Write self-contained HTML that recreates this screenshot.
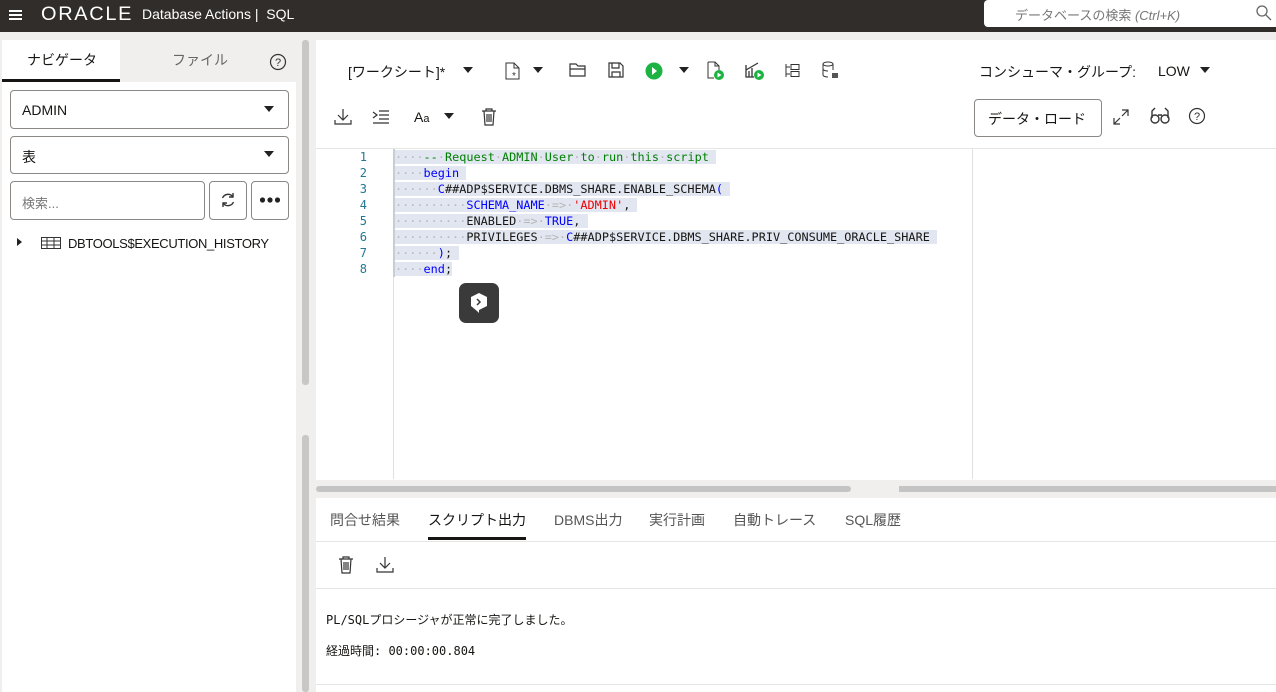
<!DOCTYPE html>
<html><head><meta charset="utf-8"><style>
*{box-sizing:border-box;margin:0;padding:0}
body{width:1276px;height:692px;overflow:hidden;background:#f1efed;font-family:"Liberation Sans","Noto Sans CJK JP",sans-serif;color:#161513;position:relative}
.a{position:absolute}
.hdr{left:0;top:0;width:1276px;height:32px;background:#312d2a;color:#fff}
.box{border:1px solid #8a8785;border-radius:4px;background:#fff}
.code{font-family:"DejaVu Sans Mono","Liberation Mono",monospace;font-size:11.85px;line-height:16px;white-space:pre}
.ln{width:367px;text-align:right;color:#237893;font-family:"DejaVu Sans Mono",monospace;font-size:12px;line-height:16px}
.sel{background:#e1e6f0}
.k{color:#0000ff}.c{color:#008000}.s{color:#e00}.d{color:#b7b7b7}
.tab{font-size:14px;color:#555}
svg{position:absolute}
</style></head><body>
<div class="a hdr">
  <div class="a" style="left:9px;top:10px;width:13px;height:2px;background:#fff;box-shadow:0 4px #fff,0 8px #fff"></div>
  <div class="a" style="left:41px;top:4px;font-size:19px;letter-spacing:1.6px;transform:scaleX(1.05);transform-origin:left">ORACLE</div>
  <div class="a" style="left:142px;top:6px;font-size:14px">Database Actions |&nbsp; SQL</div>
  <div class="a" style="left:984px;top:0;width:292px;height:27px;background:#fff;border-radius:4px 0 0 4px"></div>
  <div class="a" style="left:1015px;top:5px;font-size:13px;color:#777">データベースの検索 <i>(Ctrl+K)</i></div>
  <svg style="left:1256px;top:5px" width="16" height="16"><circle cx="6" cy="6" r="5" fill="none" stroke="#666" stroke-width="1.3"/><path d="M10 10l5 5" stroke="#666" stroke-width="1.3"/></svg>
</div>
<div class="a" style="left:2px;top:82px;width:294px;height:610px;background:#fff"></div>
<div class="a" style="left:2px;top:40px;width:118px;height:42px;background:#fff"></div>
<div class="a" style="left:2px;top:79px;width:118px;height:3px;background:#161513"></div>
<div class="a" style="left:27px;top:50px;font-size:14px">ナビゲータ</div>
<div class="a" style="left:172px;top:50px;font-size:14px;color:#666">ファイル</div>
<svg style="left:269px;top:53px" width="18" height="18"><circle cx="9" cy="9" r="7.5" fill="none" stroke="#333" stroke-width="1.2"/><text x="9" y="13" font-size="11" text-anchor="middle" fill="#333" font-family="Liberation Sans">?</text></svg>
<div class="a box" style="left:10px;top:90px;width:279px;height:39px"></div>
<div class="a" style="left:22px;top:102px;font-size:14px">ADMIN</div>
<div class="a" style="left:264px;top:106px;border:5px solid transparent;border-top:6px solid #222"></div>
<div class="a box" style="left:10px;top:136px;width:279px;height:38px"></div>
<div class="a" style="left:22px;top:147px;font-size:14px">表</div>
<div class="a" style="left:264px;top:151px;border:5px solid transparent;border-top:6px solid #222"></div>
<div class="a box" style="left:10px;top:181px;width:195px;height:39px"></div>
<div class="a" style="left:22px;top:193px;font-size:13px;color:#777">検索...</div>
<div class="a box" style="left:209px;top:181px;width:38px;height:39px"></div>
<svg style="left:219px;top:191px" width="18" height="18"><path d="M14 6A6 6 0 0 0 3.5 7M4 12a6 6 0 0 0 10.5-1" fill="none" stroke="#333" stroke-width="1.4"/><path d="M14 2v4h-4M4 16v-4h4" fill="none" stroke="#333" stroke-width="1.4"/></svg>
<div class="a box" style="left:251px;top:181px;width:38px;height:39px"></div>
<svg style="left:259px;top:196px" width="22" height="8"><circle cx="3.5" cy="4" r="2.6" fill="#222"/><circle cx="11" cy="4" r="2.6" fill="#222"/><circle cx="18.5" cy="4" r="2.6" fill="#222"/></svg>
<div class="a" style="left:17px;top:238px;border:4px solid transparent;border-left:5px solid #222"></div>
<svg style="left:41px;top:237px" width="20" height="12"><rect x="0.5" y="0.5" width="19" height="11" fill="none" stroke="#333"/><path d="M0 4h20M0 8h20M6 0v12M13 0v12" stroke="#333"/></svg>
<div class="a" style="left:68px;top:236px;font-size:13px;letter-spacing:-0.35px">DBTOOLS$EXECUTION_HISTORY</div>
<div class="a" style="left:302px;top:40px;width:7px;height:345px;background:#c9c7c5;border-radius:3px"></div>
<div class="a" style="left:302px;top:435px;width:7px;height:257px;background:#c9c7c5;border-radius:3px"></div>
<div class="a" style="left:316px;top:40px;width:960px;height:652px;background:#fff"></div>
<div class="a" style="left:348px;top:62px;font-size:14px">[ワークシート]*</div>
<div class="a" style="left:463px;top:67px;border:5px solid transparent;border-top:6px solid #222"></div>
<svg style="left:505px;top:62px" width="16" height="18"><path d="M1 1h8l5 5v11H1z M9 1v5h5" fill="none" stroke="#333"/><text x="7" y="17" font-size="10" fill="#333">*</text></svg>
<div class="a" style="left:533px;top:67px;border:5px solid transparent;border-top:6px solid #222"></div>
<svg style="left:569px;top:63px" width="18" height="14"><path d="M1 1h6l2 2h7v10H1zM1 6h15" fill="none" stroke="#333" stroke-width="1.2"/></svg>
<svg style="left:608px;top:62px" width="16" height="16"><path d="M1 1h11l3 3v11H1z M4 1v5h7V1 M4 15v-5h8v5" fill="none" stroke="#333" stroke-width="1.2"/></svg>
<svg style="left:645px;top:62px" width="18" height="18"><circle cx="9" cy="9" r="8.5" fill="#1cb342"/><path d="M7 5l5 4-5 4z" fill="#fff"/></svg>
<div class="a" style="left:679px;top:67px;border:5px solid transparent;border-top:6px solid #222"></div>
<svg style="left:707px;top:61px" width="18" height="20"><path d="M1 1h7l4 4v6 M8 1v4h4 M1 1v16h6" fill="none" stroke="#333"/><circle cx="12" cy="14" r="5" fill="#1cb342"/><path d="M10.5 11.5l4 2.5-4 2.5z" fill="#fff"/></svg>
<svg style="left:745px;top:61px" width="20" height="20"><path d="M1 4v12h8M4 10v6M7 7v9M1 9l12-7" fill="none" stroke="#333" stroke-width="1.3"/><circle cx="14" cy="14" r="5" fill="#1cb342"/><path d="M12.5 11.5l4 2.5-4 2.5z" fill="#fff"/></svg>
<svg style="left:784px;top:63px" width="16" height="16"><path d="M2 1v13M2 4h4M2 11h4" stroke="#333" fill="none"/><rect x="7" y="1.5" width="8" height="5" fill="none" stroke="#333"/><rect x="7" y="8.5" width="8" height="5" fill="none" stroke="#333"/></svg>
<svg style="left:822px;top:61px" width="18" height="18"><ellipse cx="6" cy="3" rx="5" ry="2" fill="none" stroke="#333"/><path d="M1 3v11c0 1 2 2 5 2M11 3v6M1 8c0 1 2 2 5 2" fill="none" stroke="#333"/><rect x="10" y="12" width="6" height="5" fill="#555"/></svg>
<div class="a" style="left:979px;top:62px;font-size:14px">コンシューマ・グループ:</div>
<div class="a" style="left:1158px;top:63px;font-size:14px">LOW</div>
<div class="a" style="left:1200px;top:67px;border:5px solid transparent;border-top:6px solid #222"></div>
<svg style="left:334px;top:108px" width="18" height="18"><path d="M9 1v11M4 7l5 5 5-5M1 12v4h16v-4" fill="none" stroke="#333" stroke-width="1.2"/></svg>
<svg style="left:372px;top:110px" width="18" height="16"><path d="M1 2l4 3-4 3M7 1h10M7 5h10M7 9h10M1 13h16" fill="none" stroke="#333" stroke-width="1.2"/></svg>
<div class="a" style="left:414px;top:109px;font-size:14px">A<span style="font-size:11px">a</span></div>
<div class="a" style="left:444px;top:113px;border:5px solid transparent;border-top:6px solid #222"></div>
<svg style="left:481px;top:108px" width="16" height="18"><path d="M1 3h14M5 3V1h6v2M3 3l1 14h8l1-14M6 6v8M8 6v8M10 6v8" fill="none" stroke="#333" stroke-width="1.2"/></svg>
<div class="a box" style="left:974px;top:99px;width:128px;height:38px"></div>
<div class="a" style="left:988px;top:109px;font-size:14px">データ・ロード</div>
<svg style="left:1113px;top:109px" width="16" height="16"><path d="M9 1h6v6M15 1L9 7M7 15H1V9M1 15l6-6" fill="none" stroke="#333" stroke-width="1.2"/></svg>
<svg style="left:1150px;top:107px" width="20" height="18"><circle cx="5" cy="12" r="4" fill="none" stroke="#333" stroke-width="1.4"/><circle cx="15" cy="12" r="4" fill="none" stroke="#333" stroke-width="1.4"/><path d="M2 11V4l3-3M18 11V4l-3-3M8 8h4" fill="none" stroke="#333" stroke-width="1.4"/></svg>
<svg style="left:1188px;top:107px" width="18" height="18"><circle cx="9" cy="9" r="7.5" fill="none" stroke="#333" stroke-width="1.2"/><text x="9" y="13" font-size="11" text-anchor="middle" fill="#333" font-family="Liberation Sans">?</text></svg>
<div class="a" style="left:316px;top:148px;width:960px;height:1px;background:#e5e5e5"></div>
<div class="a" style="left:393px;top:149px;width:1px;height:330px;background:#e0e0e0"></div>
<div class="a" style="left:972px;top:149px;width:1px;height:330px;background:#e0e0e0"></div>
<div class="a" style="left:0;top:149px">
<div class="ln">1<br>2<br>3<br>4<br>5<br>6<br>7<br>8</div>
</div>
<div class="a code" style="left:395px;top:149px"><span class="sel"><span class="d">····</span><span class="c">--<span class="d">·</span>Request<span class="d">·</span>ADMIN<span class="d">·</span>User<span class="d">·</span>to<span class="d">·</span>run<span class="d">·</span>this<span class="d">·</span>script</span> </span>
<span class="sel"><span class="d">····</span><span class="k">begin</span> </span>
<span class="sel"><span class="d">······</span><span class="k">C</span>##ADP$SERVICE.DBMS_SHARE.ENABLE_SCHEMA<span class="k">(</span> </span>
<span class="sel"><span class="d">··········</span><span class="k">SCHEMA_NAME</span><span class="d">·=>·</span><span class="s">'ADMIN'</span>, </span>
<span class="sel"><span class="d">··········</span>ENABLED<span class="d">·=>·</span><span class="k">TRUE</span>, </span>
<span class="sel"><span class="d">··········</span>PRIVILEGES<span class="d">·=>·</span><span class="k">C</span>##ADP$SERVICE.DBMS_SHARE.PRIV_CONSUME_ORACLE_SHARE </span>
<span class="sel"><span class="d">······</span><span class="k">)</span>; </span>
<span class="sel"><span class="d">····</span><span class="k">end</span>;</span></div>
<div class="a" style="left:393px;top:149px;width:2px;height:128px;background:#c8cdd6"></div>
<div class="a" style="left:459px;top:283px;width:40px;height:40px;background:#3a3a3a;border-radius:7px"></div>
<svg style="left:469px;top:292px" width="20" height="22"><path d="M10 1l8 4v9l-8 4v3l-2-2-6-5V5z" fill="#fff"/><path d="M8 7l3 3-3 3" fill="none" stroke="#3a3a3a" stroke-width="1.5"/></svg>
<div class="a" style="left:316px;top:480px;width:960px;height:18px;background:#f1efed"></div>
<div class="a" style="left:316px;top:486px;width:535px;height:6px;background:#c4c4c4;border-radius:3px"></div>
<div class="a" style="left:899px;top:486px;width:377px;height:6px;background:#c4c4c4"></div>
<div class="a" style="left:316px;top:498px;width:960px;height:194px;background:#fff"></div>
<div class="a tab" style="left:330px;top:510px">問合せ結果</div>
<div class="a tab" style="left:428px;top:510px;color:#161513">スクリプト出力</div>
<div class="a" style="left:428px;top:537px;width:98px;height:3px;background:#161513"></div>
<div class="a tab" style="left:554px;top:510px">DBMS出力</div>
<div class="a tab" style="left:649px;top:510px">実行計画</div>
<div class="a tab" style="left:733px;top:510px">自動トレース</div>
<div class="a tab" style="left:845px;top:510px">SQL履歴</div>
<div class="a" style="left:316px;top:541px;width:960px;height:1px;background:#e5e5e5"></div>
<svg style="left:338px;top:556px" width="16" height="18"><path d="M1 3h14M5 3V1h6v2M3 3l1 14h8l1-14M6 6v8M8 6v8M10 6v8" fill="none" stroke="#333" stroke-width="1.2"/></svg>
<svg style="left:376px;top:556px" width="18" height="18"><path d="M9 1v11M4 7l5 5 5-5M1 12v4h16v-4" fill="none" stroke="#333" stroke-width="1.2"/></svg>
<div class="a" style="left:316px;top:588px;width:960px;height:1px;background:#e5e5e5"></div>
<div class="a code" style="left:326px;top:612px;font-size:12px">PL/SQLプロシージャが正常に完了しました。</div>
<div class="a code" style="left:326px;top:643px;font-size:12px">経過時間: 00:00:00.804</div>
<div class="a" style="left:316px;top:684px;width:960px;height:1px;background:#e5e5e5"></div>
</body></html>
